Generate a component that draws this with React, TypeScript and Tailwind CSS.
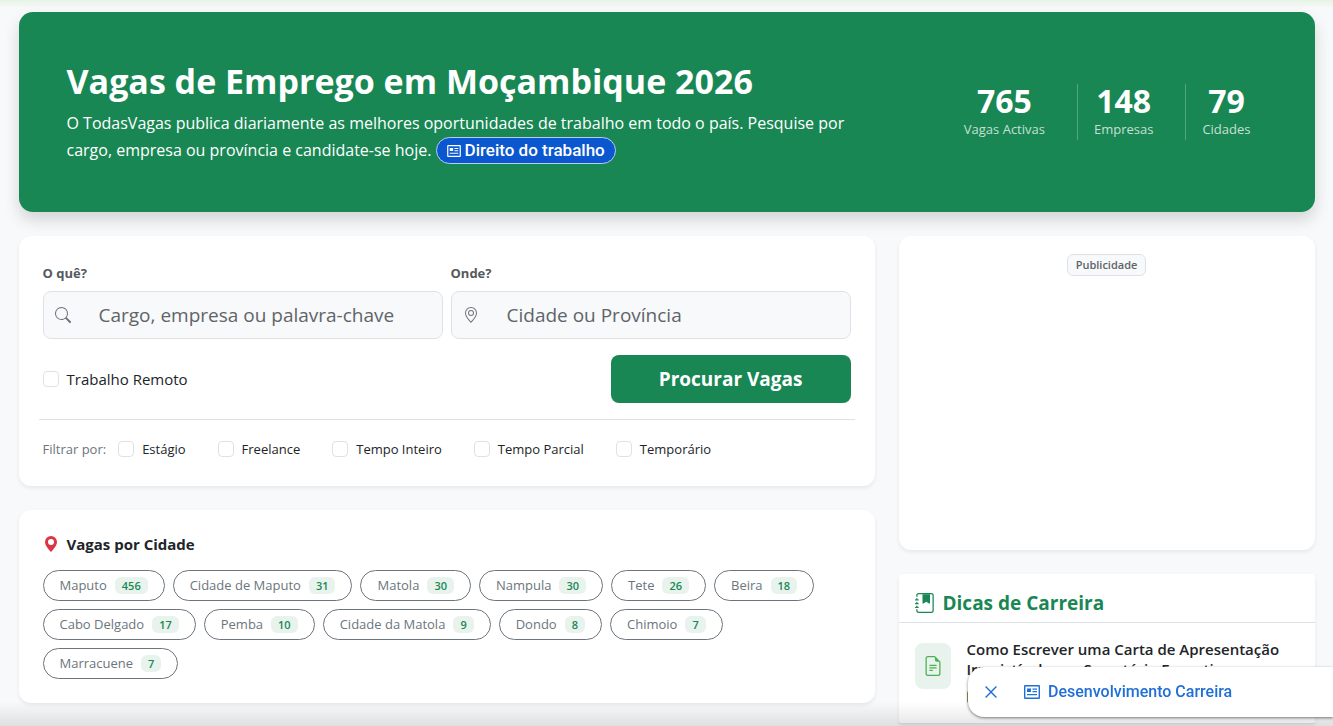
import type { ReactNode } from 'react';
import {
  BsFileEarmarkText,
  BsGeoAlt,
  BsGeoAltFill,
  BsJournalBookmarkFill,
  BsSearch,
} from 'react-icons/bs';

const stats = [
  { value: 765, label: 'Vagas Activas' },
  { value: 148, label: 'Empresas' },
  { value: 79, label: 'Cidades' },
];

const jobTypes = ['Estágio', 'Freelance', 'Tempo Inteiro', 'Tempo Parcial', 'Temporário'];

const cities = [
  { name: 'Maputo', count: 456 },
  { name: 'Cidade de Maputo', count: 31 },
  { name: 'Matola', count: 30 },
  { name: 'Nampula', count: 30 },
  { name: 'Tete', count: 26 },
  { name: 'Beira', count: 18 },
  { name: 'Cabo Delgado', count: 17 },
  { name: 'Pemba', count: 10 },
  { name: 'Cidade da Matola', count: 9 },
  { name: 'Dondo', count: 8 },
  { name: 'Chimoio', count: 7 },
  { name: 'Marracuene', count: 7 },
];

function NewsIcon({ className }: { className: string }) {
  return (
    <svg viewBox="0 0 16 14" fill="none" stroke="currentColor" className={className} aria-hidden="true">
      <rect x="0.7" y="0.7" width="14.6" height="12.6" rx="0.5" strokeWidth="1.4" />
      <rect x="3" y="3.5" width="4" height="3.5" fill="currentColor" stroke="none" />
      <path d="M8.5 4.2H13M8.5 6.6H13M3 9.7H13" strokeWidth="1.2" />
    </svg>
  );
}

function Hero() {
  return (
    <header className="grid grid-cols-12 items-center gap-6 rounded-[14px] bg-[#198754] p-12 text-white shadow-[0_8px_16px_rgba(0,0,0,0.15)]">
      <div className="col-span-8">
        <h1 className="mb-2 text-[34px] leading-[42px] font-bold">Vagas de Emprego em Moçambique 2026</h1>
        <p className="text-base leading-[27px]">
          O TodasVagas publica diariamente as melhores oportunidades de trabalho em todo o país. Pesquise por
          cargo, empresa ou província e candidate-se hoje.{' '}
          <a
            href="#direito"
            className="inline-flex h-[27px] items-center gap-1 rounded-full border border-[#b9cdf0] bg-[#0b57d0] px-2.5 align-top font-[Roboto,sans-serif] text-[17px] font-medium"
          >
            <NewsIcon className="h-3 w-3.5" />
            Direito do trabalho
          </a>
        </p>
      </div>
      <div className="col-span-4 flex justify-end gap-4 text-center">
        {stats.map((stat) => (
          <div key={stat.label} className="border-l border-white/25 px-4 first:border-l-0">
            <div className="text-[32px] leading-[34px] font-bold">{stat.value}</div>
            <div className="text-[13px] leading-[22px] text-white/75">{stat.label}</div>
          </div>
        ))}
      </div>
    </header>
  );
}

function Field({ id, label, placeholder, icon }: { id: string; label: string; placeholder: string; icon: ReactNode }) {
  return (
    <div className="min-w-0 flex-1">
      <label htmlFor={id} className="mb-[5px] block text-[13px] leading-[26px] font-bold text-[#54595e]">
        {label}
      </label>
      <div className="flex h-12 items-center gap-7 rounded-lg border border-[#dee2e6] bg-[#f8f9fa] pl-[11px] text-[#6c757d]">
        {icon}
        <input
          id={id}
          type="text"
          placeholder={placeholder}
          className="min-w-0 flex-1 bg-transparent text-[19px] text-[#212529] outline-none placeholder:text-[#5f6469]"
        />
      </div>
    </div>
  );
}

function Check({ label, className }: { label: string; className: string }) {
  return (
    <label className={className}>
      <input type="checkbox" className="size-4 appearance-none rounded border border-[#dee2e6] bg-white checked:bg-[#198754]" />
      {label}
    </label>
  );
}

function SearchCard() {
  return (
    <form className="rounded-xl bg-white p-6 shadow-[0_2px_4px_rgba(0,0,0,0.075)]">
      <div className="flex gap-2">
        <Field id="what" label="O quê?" placeholder="Cargo, empresa ou palavra-chave" icon={<BsSearch className="size-4" />} />
        <Field id="where" label="Onde?" placeholder="Cidade ou Província" icon={<BsGeoAlt className="size-4" />} />
      </div>
      <div className="mt-4 flex items-center justify-between">
        <Check label="Trabalho Remoto" className="flex items-center gap-2 text-[15px]" />
        <button type="button" className="h-12 rounded-lg bg-[#198754] px-12 text-[19px] font-bold text-white">
          Procurar Vagas
        </button>
      </div>
      <div className="-mx-1 mt-4 flex items-center gap-8 border-t border-[#dee2e6] px-1 pt-4 text-[13px] leading-[26px]">
        <div className="flex items-center gap-3">
          <span className="text-[#6c757d]">Filtrar por:</span>
          <Check label={jobTypes[0]} className="flex items-center gap-2" />
        </div>
        {jobTypes.slice(1).map((type) => (
          <Check key={type} label={type} className="flex items-center gap-2" />
        ))}
      </div>
    </form>
  );
}

function CitiesCard() {
  return (
    <section className="rounded-xl bg-white p-6 shadow-[0_2px_4px_rgba(0,0,0,0.075)]">
      <h2 className="mb-4 flex items-center gap-2 text-[15px] leading-5 font-bold">
        <BsGeoAltFill className="size-4 text-[#dc3545]" />
        Vagas por Cidade
      </h2>
      <div className="flex flex-wrap gap-2">
        {cities.map((city) => (
          <a
            key={city.name}
            href="#vagas"
            className="flex h-[31px] items-center gap-2 rounded-full border border-[#6c757d] px-4 text-[13px] text-[#6c757d]"
          >
            {city.name}
            <span className="rounded-md bg-[#e8f3ee] px-[7px] text-[11px] leading-[17px] font-semibold text-[#198754]">
              {city.count}
            </span>
          </a>
        ))}
      </div>
    </section>
  );
}

function CareerTips() {
  return (
    <section className="rounded bg-white shadow-[0_2px_4px_rgba(0,0,0,0.075)]">
      <h2 className="flex items-center gap-2 border-b border-[#dee2e6] px-4 pt-[17px] pb-[7px] text-[19px] leading-6 font-bold text-[#198754]">
        <BsJournalBookmarkFill className="size-5" />
        Dicas de Carreira
      </h2>
      <a href="#carta" className="flex items-start gap-4 border-b border-[#dee2e6] p-4">
        <span className="mt-1 flex h-[46px] w-9 shrink-0 items-center justify-center rounded-lg bg-[#e8f3ee]">
          <BsFileEarmarkText className="size-5 text-[#4caf50]" />
        </span>
        <span className="text-[15px] leading-5 font-semibold">
          Como Escrever uma Carta de Apresentação Irresistível para Secretário Executivo
          <span className="mt-3 mb-1 block h-3 w-10 rounded-xs bg-[#8a9a50]" />
        </span>
      </a>
    </section>
  );
}

function CareerBar() {
  return (
    <div className="fixed right-0 bottom-[9px] z-20 flex h-[50px] w-[365px] items-center rounded-l-2xl bg-white pl-[17px] font-[Roboto,sans-serif] text-[#1f6fd6] shadow-[0_1px_3px_rgba(0,0,0,0.5)]">
      <button type="button" aria-label="Fechar" className="mr-[27px]">
        <svg viewBox="0 0 12 12" className="size-3" fill="none" stroke="currentColor" strokeWidth="1.4">
          <path d="M0.6 0.6L11.4 11.4M11.4 0.6L0.6 11.4" />
        </svg>
      </button>
      <a href="#desenvolvimento" className="flex items-center gap-2 font-medium">
        <NewsIcon className="h-3.5 w-4" />
        Desenvolvimento Carreira
      </a>
    </div>
  );
}

export default function App() {
  return (
    <div className="h-screen overflow-hidden bg-[#f8f9fb] font-['Open_Sans',sans-serif] text-[#212529]">
      <div className="pointer-events-none fixed inset-x-0 top-0 h-2 bg-linear-to-b from-[#e6f3e4] to-transparent" />
      <main className="mx-auto max-w-[1320px] px-3 pt-3">
        <Hero />
        <div className="mt-6 grid grid-cols-12 items-start gap-6">
          <div className="col-span-8 flex flex-col gap-6">
            <SearchCard />
            <CitiesCard />
          </div>
          <aside className="col-span-4 flex flex-col gap-6">
            <div className="flex h-[314px] items-start justify-center rounded-xl bg-white pt-[18px] shadow-[0_2px_4px_rgba(0,0,0,0.075)]">
              <span className="rounded-md border border-[#dee2e6] bg-[#f8f9fa] px-2 text-[11px] leading-5 font-semibold text-[#5c646c]">
                Publicidade
              </span>
            </div>
            <CareerTips />
          </aside>
        </div>
      </main>
      <div className="pointer-events-none fixed inset-x-0 bottom-0 z-10 h-6 bg-linear-to-t from-black/10 to-transparent" />
      <CareerBar />
    </div>
  );
}
